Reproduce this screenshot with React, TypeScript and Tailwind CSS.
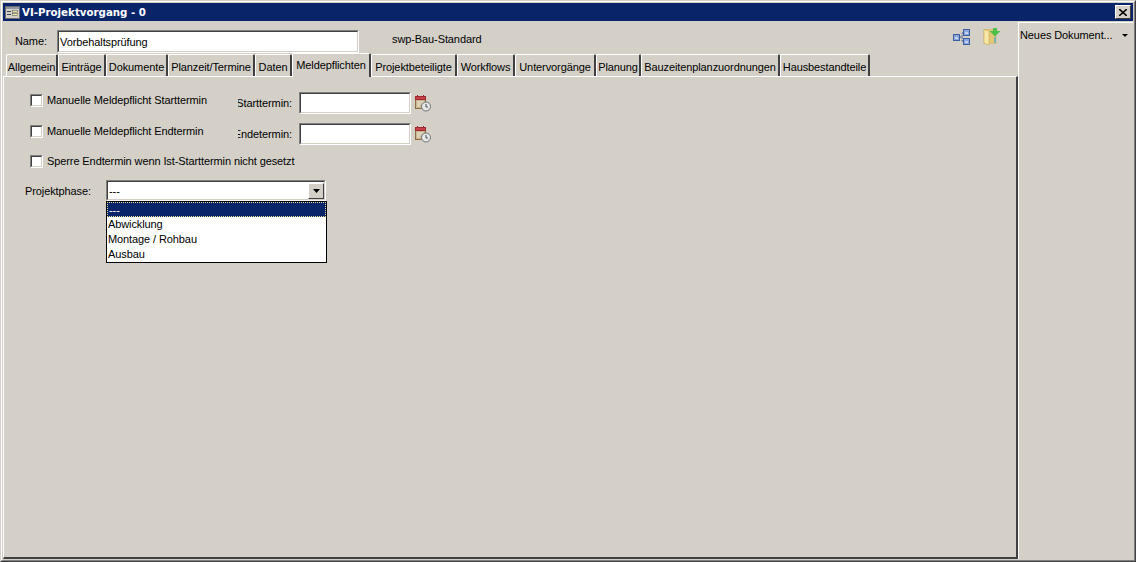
import React from "react";

const tabs = [
  { label: "Allgemein", width: "w-[52px]" },
  { label: "Einträge", width: "w-[48px]" },
  { label: "Dokumente", width: "w-[62px]" },
  { label: "Planzeit/Termine", width: "w-[87px]" },
  { label: "Daten", width: "w-[37px]" },
  { label: "Meldepflichten", width: "w-[79px]", active: true },
  { label: "Projektbeteiligte", width: "w-[86px]" },
  { label: "Workflows", width: "w-[58px]" },
  { label: "Untervorgänge", width: "w-[81px]" },
  { label: "Planung", width: "w-[45px]" },
  { label: "Bauzeitenplanzuordnungen", width: "w-[139px]" },
  { label: "Hausbestandteile", width: "w-[90px]" },
];

const options = ["Abwicklung", "Montage / Rohbau", "Ausbau"];

// Classic two-tone sunken edge used by inputs and checkboxes.
const Sunken = ({ className, children }: { className: string; children?: React.ReactNode }) => (
  <div className={`border border-t-[#808080] border-l-[#808080] border-r-white border-b-white ${className}`}>
    <div className="h-full w-full border border-t-[#404040] border-l-[#404040] border-r-[#d4d0c8] border-b-[#d4d0c8] bg-white overflow-hidden">
      {children}
    </div>
  </div>
);

const CalendarIcon = () => (
  <svg width="18" height="18" viewBox="0 0 18 18" className="shrink-0">
    <rect x="1.5" y="3.5" width="10" height="11" fill="#c8b48c" stroke="#8a6d45" />
    <rect x="1.5" y="2.5" width="10" height="3" fill="#c8404a" stroke="#9c2a30" />
    <path d="M3.5 1v2M9.5 1v2" stroke="#9c2a30" />
    <path d="M3 8h7M3 10h4M3 12h3" stroke="#f3eee2" />
    <circle cx="12" cy="12.5" r="4.5" fill="#e6e8e8" stroke="#6c7378" />
    <path d="M12 10v3h2" stroke="#4a5054" fill="none" />
  </svg>
);

const NetworkIcon = () => (
  <svg width="17" height="16" viewBox="0 0 17 16">
    <path d="M6 8h3M9 8V4h1M9 8v4h1" stroke="#44608c" strokeDasharray="2 1" fill="none" />
    <rect x="0.5" y="5.5" width="6" height="6" fill="#8aa6dc" stroke="#3a5f9f" />
    <rect x="10.5" y="0.5" width="6" height="6" fill="#8aa6dc" stroke="#3a5f9f" />
    <rect x="10.5" y="9.5" width="6" height="6" fill="#8aa6dc" stroke="#3a5f9f" />
    <path d="M2 9h3M12 4h3M12 13h3" stroke="#fff" />
  </svg>
);

const FolderIcon = () => (
  <svg width="18" height="18" viewBox="0 0 18 18">
    <path d="M1 1.5h12v14H1z" fill="#e4c878" stroke="#d4b468" strokeWidth="0.6" />
    <path d="M1 1.5l5 1.5v14l-5-2z" fill="#f8e8a8" stroke="#c8a850" strokeWidth="0.6" />
    <path d="M10 0h4v3h3.5l-5.5 5.5L6.5 3H10z" fill="#4fc04a" />
    <path d="M12 9v6" stroke="#38a8d8" strokeWidth="1.2" />
  </svg>
);

const WindowIcon = () => (
  <svg width="15" height="13" viewBox="0 0 15 13">
    <rect x="0.5" y="0.5" width="14" height="12" fill="#d4d0c8" stroke="#6a6a72" />
    <rect x="1" y="1" width="13" height="2" fill="#8d97a2" />
    <rect x="2" y="5" width="4" height="1" fill="#40444c" />
    <rect x="2" y="8" width="4" height="1" fill="#40444c" />
    <rect x="7.5" y="4.5" width="5" height="2" fill="#f0e8a0" stroke="#50545c" strokeWidth="0.5" />
    <rect x="7.5" y="7.5" width="5" height="2" fill="#f0e8a0" stroke="#50545c" strokeWidth="0.5" />
  </svg>
);

const CheckRow = ({ label, className }: { label: string; className: string }) => (
  <div className={`flex items-center gap-[4px] ${className}`}>
    <Sunken className="h-[13px] w-[13px] shrink-0" />
    <span className="whitespace-nowrap">{label}</span>
  </div>
);

const DateRow = ({ check, label, className }: { check: string; label: string; className: string }) => (
  <div className={`flex h-[22px] items-center pl-[26px] ${className}`}>
    <div className="w-[208px] shrink-0">
      <CheckRow label={check} className="-mt-[6px]" />
    </div>
    <div className="flex w-[54px] shrink-0 justify-end overflow-hidden whitespace-nowrap">{label}</div>
    <Sunken className="ml-[7px] h-[22px] w-[112px] shrink-0" />
    <div className="ml-[3px]">
      <CalendarIcon />
    </div>
  </div>
);

export default function App() {
  return (
    <div className="h-[562px] w-[1136px] overflow-hidden border border-t-[#d4d0c8] border-l-[#d4d0c8] border-r-[#404040] border-b-[#404040] bg-[#d4d0c8] font-['Liberation_Sans',sans-serif] text-[11px] leading-[14px] tracking-[-0.1px] text-black">
      <div className="flex h-full flex-col border border-t-white border-l-white border-r-[#808080] border-b-[#808080] p-px">
        {/* Title bar */}
        <div className="flex h-[18px] shrink-0 items-center bg-[#0a246a] pl-[2px] pr-[2px]">
          <WindowIcon />
          <span className="ml-[2px] font-['DejaVu_Sans',sans-serif] text-[10.25px] font-bold tracking-normal text-white">VI-Projektvorgang - 0</span>
          <div className="ml-auto flex h-[14px] w-[16px] items-center justify-center border border-t-white border-l-white border-r-[#404040] border-b-[#404040] bg-[#d4d0c8]">
            <svg width="8" height="7" viewBox="0 0 8 7">
              <path d="M0 0l8 7M8 0L0 7" stroke="#000" strokeWidth="1.6" />
            </svg>
          </div>
        </div>

        <div className="flex min-h-0 flex-1">
          {/* Main pane */}
          <div className="flex w-[1015px] shrink-0 flex-col">
            <div className="flex h-[32px] shrink-0 items-center pt-[8px] pl-[12px]">
              <span className="w-[42px] shrink-0">Name:</span>
              <Sunken className="h-[23px] w-[302px] shrink-0">
                <div className="pl-[1px] pt-[3px]">Vorbehaltsprüfung</div>
              </Sunken>
              <span className="ml-[33px] -mt-[4px]">swp-Bau-Standard</span>
              <div className="ml-auto mr-[17px] -mt-[9px] flex items-center gap-[13px]">
                <NetworkIcon />
                <FolderIcon />
              </div>
            </div>

            {/* Tabs */}
            <div className="flex h-[23px] shrink-0 items-end pl-[3px] pt-0">
              {tabs.map((tab) => (
                <div
                  key={tab.label}
                  className={
                    tab.active
                      ? `${tab.width} relative z-10 -mb-px flex h-[24px] shrink-0 justify-center whitespace-nowrap rounded-t-[2px] border-t border-l border-r-2 border-t-white border-l-white border-r-[#404040] bg-[#d4d0c8] pt-[4px]`
                      : `${tab.width} flex h-[22px] shrink-0 justify-center whitespace-nowrap rounded-t-[2px] border-t border-l border-r-2 border-t-white border-l-white border-r-[#404040] pt-[5px]`
                  }
                >
                  {tab.label}
                </div>
              ))}
            </div>

            {/* Tab page */}
            <div className="relative flex min-h-0 flex-1 flex-col border-t border-l border-t-white border-l-white border-b-2 border-r-2 border-b-[#404040] border-r-[#404040] pt-[15px]">
              <DateRow check="Manuelle Meldepflicht Starttermin" label="Starttermin:" className="" />
              <DateRow check="Manuelle Meldepflicht Endtermin" label="Endetermin:" className="mt-[9px]" />
              <CheckRow label="Sperre Endtermin wenn Ist-Starttermin nicht gesetzt" className="mt-[9px] pl-[26px]" />
              <div className="mt-[12px] flex items-center pl-[21px]">
                <span className="w-[81px] shrink-0">Projektphase:</span>
                <div className="relative">
                  <Sunken className="h-[21px] w-[220px]">
                    <div className="flex h-full items-center justify-between pl-[1px]">
                      <span>---</span>
                      <div className="flex h-[16px] w-[16px] items-center justify-center border border-t-white border-l-white border-r-[#404040] border-b-[#404040] bg-[#d4d0c8]">
                        <svg width="7" height="4" viewBox="0 0 7 4">
                          <path d="M0 0h7L3.5 4z" fill="#000" />
                        </svg>
                      </div>
                    </div>
                  </Sunken>
                  {/* Open dropdown list */}
                  <div className="absolute left-0 top-[21px] z-20 w-[221px] border border-black bg-white">
                    <div className="h-[15px] border border-dotted border-[#e8e0a0] bg-[#0a246a] pl-[1px] text-white">---</div>
                    {options.map((option) => (
                      <div key={option} className="h-[15px] pl-[1px]">
                        {option}
                      </div>
                    ))}
                  </div>
                </div>
              </div>
            </div>
          </div>

          {/* Side panel */}
          <div className="mt-[1px] flex-1 border-t border-l border-t-white border-l-white pl-[1px] pt-[5px]">
            <div className="flex items-center justify-between pr-[5px]">
              <span>Neues Dokument...</span>
              <svg width="6" height="3" viewBox="0 0 6 3">
                <path d="M0 0h6L3 3z" fill="#000" />
              </svg>
            </div>
          </div>
        </div>
      </div>
    </div>
  );
}
